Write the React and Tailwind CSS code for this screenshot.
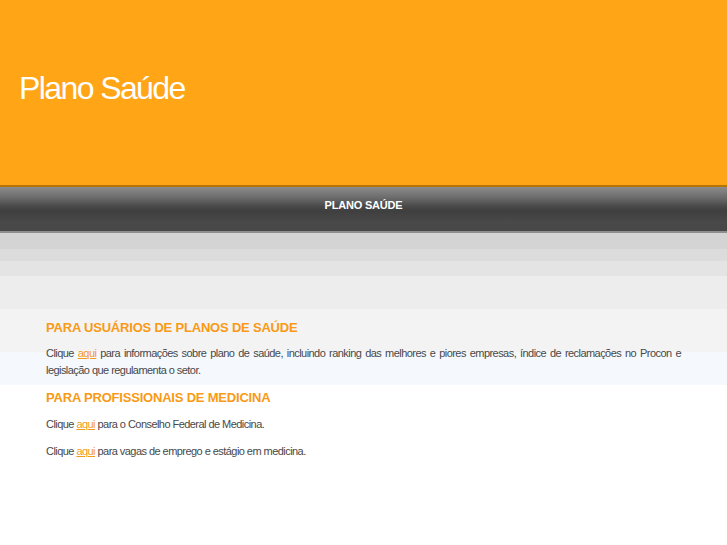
export default function App() {
  return (
    <div className="min-h-[545px] bg-white font-['Liberation_Sans',Arial,sans-serif]">
      {/* Header */}
      <header className="h-[187px] bg-[#ffa516] border-b-2 border-[#b87400] pt-[72px]">
        <h1 className="pl-[19px] text-[32px] leading-none tracking-[-1.6px] text-white">
          Plano Saúde
        </h1>
      </header>

      {/* Nav bar */}
      <nav className="h-[46px] bg-[linear-gradient(to_bottom,#8c8c8c_0%,#6a6a6a_25%,#474747_45%,#3f3f3f_55%,#494949_80%,#474747_100%)] border-b-2 border-[#8e8e8e] flex items-center justify-center">
        <span className="text-[11px] font-bold text-white tracking-[-0.2px] mt-[-8px]">PLANO SAÚDE</span>
      </nav>

      {/* Content */}
      <main className="bg-[linear-gradient(to_bottom,#d4d4d4_0px,#d4d4d4_16px,#dcdcdc_16px,#dcdcdc_28px,#e4e4e4_28px,#e4e4e4_43px,#ededed_43px,#ededed_76px,#f3f3f3_76px,#f3f3f3_119px,#f5f8fc_119px,#f5f8fc_152px,#ffffff_152px)] pt-[87px] px-[46px] pb-10">
        <h2 className="text-[13px] leading-[16px] font-bold tracking-[-0.2px] text-[#f99a16]">
          PARA USUÁRIOS DE PLANOS DE SAÚDE
        </h2>
        <p className="mt-[9px] text-[11px] leading-[17px] text-[#484848] text-justify tracking-[-0.55px]">
          Clique <a href="#" className="text-[#f39a1a] underline">aqui</a> para informações sobre plano de saúde, incluindo ranking das melhores e piores empresas, índice de reclamações no Procon e legislação que regulamenta o setor.
        </p>
        <h2 className="mt-[11px] text-[13px] leading-[16px] font-bold tracking-[-0.2px] text-[#f99a16]">
          PARA PROFISSIONAIS DE MEDICINA
        </h2>
        <p className="mt-[10px] text-[11px] leading-[17px] text-[#484848] tracking-[-0.55px]">
          Clique <a href="#" className="text-[#f39a1a] underline">aqui</a> para o Conselho Federal de Medicina.
        </p>
        <p className="mt-[10px] text-[11px] leading-[17px] text-[#484848] tracking-[-0.55px]">
          Clique <a href="#" className="text-[#f39a1a] underline">aqui</a> para vagas de emprego e estágio em medicina.
        </p>
      </main>
    </div>
  );
}
